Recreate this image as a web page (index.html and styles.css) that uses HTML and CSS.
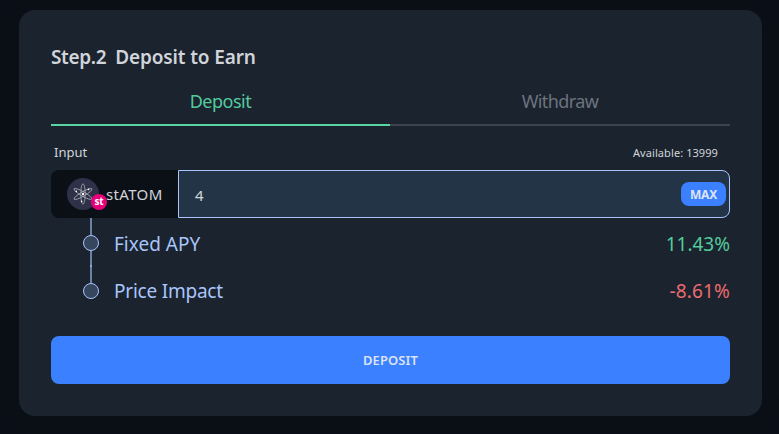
FILE: index.html
```html
<!DOCTYPE html>
<html lang="en">
<head>
<meta charset="utf-8">
<title>Deposit to Earn</title>
<link rel="stylesheet" href="styles.css">
</head>
<body>
<main class="card">
  <h1 class="title"><span class="step">Step.2</span><span>Deposit to Earn</span></h1>
  <nav class="tabs">
    <button class="tab tab-active">Deposit</button>
    <button class="tab">Withdraw</button>
  </nav>
  <div class="labels"><span class="label">Input</span><span class="available">Available: 13999</span></div>
  <div class="field">
    <div class="token">
      <span class="coin">
        <svg class="atom" viewBox="0 0 32 32" width="32" height="32">
          <circle cx="16" cy="16" r="16" fill="#2e3148"/>
          <g fill="none" stroke="#c3c5cf" stroke-width=".65">
            <ellipse cx="16" cy="16" rx="2.2" ry="10.3"/>
            <ellipse cx="16" cy="16" rx="2.2" ry="10.3" transform="rotate(60 16 16)"/>
            <ellipse cx="16" cy="16" rx="2.2" ry="10.3" transform="rotate(-60 16 16)"/>
          </g>
          <g fill="#fff"><circle cx="16" cy="16" r="1.2"/><circle cx="21.5" cy="11.3" r=".85"/><circle cx="9.3" cy="13.3" r=".85"/><circle cx="14.6" cy="23.3" r=".85"/></g>
        </svg>
        <span class="badge">st</span>
      </span>
      <span class="symbol">stATOM</span>
    </div>
    <div class="amount"><span class="value">4</span><button class="max">MAX</button></div>
  </div>
  <ul class="stats">
    <li class="stat"><span class="rail"><i class="line"></i><i class="dot"></i><i class="line line-after"></i><i class="joint"></i></span><span class="name fixed">Fixed APY</span><span class="up">11.43%</span></li>
    <li class="stat"><span class="rail"><i class="joint"></i><i class="line line-short"></i><i class="dot"></i></span><span class="name">Price Impact</span><span class="down">-8.61%</span></li>
  </ul>
  <button class="submit">DEPOSIT</button>
</main>
</body>
</html>
```
FILE: styles.css
```css
* { box-sizing: border-box; }
body {
  margin: 0;
  height: 434px;
  padding: 10px 17px 18px 19px;
  overflow: hidden;
  background: #0b1018;
  color: #d1d4d9;
  font-family: "Segoe UI", "Noto Sans", sans-serif;
}
button { border: 0; padding: 0; background: none; color: inherit; font: inherit; }
.card {
  height: 406px;
  padding: 32px;
  border-radius: 16px;
  background: #1a232e;
  box-shadow: 0 4px 24px rgba(10, 16, 20, .8);
}
.title {
  display: flex;
  gap: 9px;
  margin: 0;
  height: 30px;
  font-size: 19px;
  line-height: 30px;
  font-weight: 600;
  letter-spacing: -.13px;
  white-space: nowrap;
}
.step { letter-spacing: -.35px; }
.tabs { display: flex; height: 44px; margin-top: 10px; }
.tab {
  flex: 1;
  padding-bottom: 4px;
  border-bottom: 2px solid #3c444f;
  color: #6c737d;
  font-size: 18px;
  letter-spacing: -.5px;
}
.tab + .tab { letter-spacing: -.6px; }
.tab-active { flex: 0 0 339px; border-color: #58d5a2; color: #54cb9d; }
.labels {
  display: flex;
  justify-content: space-between;
  align-items: center;
  height: 44px;
  padding: 8px 12px 0 3px;
}
.label { font-size: 13px; }
.available { font-size: 11px; letter-spacing: .08px; }
.field { display: flex; height: 48px; }
.token {
  display: flex;
  align-items: center;
  width: 127px;
  padding-left: 16px;
  border-radius: 8px 0 0 8px;
  background: #0b1017;
}
.coin { position: relative; width: 39px; height: 32px; }
.atom { display: block; }
.badge {
  position: absolute;
  left: 24px;
  top: 16px;
  width: 16px;
  height: 16px;
  border-radius: 50%;
  background: #e6007a;
  color: #fff;
  font-size: 10px;
  font-weight: 700;
  line-height: 15px;
  letter-spacing: -.3px;
  text-align: center;
}
.symbol { font-size: 15px; letter-spacing: .35px; }
.amount {
  flex: 1;
  display: flex;
  align-items: center;
  justify-content: space-between;
  padding: 0 3px 0 16px;
  border: 1px solid #a9c5fb;
  border-radius: 0 8px 8px 0;
  background: #243447;
}
.value { font-size: 15px; padding-top: 2px; }
.max {
  width: 45px;
  height: 24px;
  border-radius: 8px;
  background: #3a80ff;
  color: #dbe3f4;
  font-size: 12px;
  font-weight: 700;
  letter-spacing: -.25px;
}
.stats { list-style: none; margin: 0; padding: 0; }
.stat { display: flex; height: 48px; font-size: 19px; line-height: 28px; color: #a9c5fb; }
.rail { display: flex; flex-direction: column; align-items: center; width: 80px; height: 48px; margin-right: -17px; }
.line { width: 2px; height: 17px; background: #6b81a5; }
.line-after { height: 14px; }
.line-short { height: 16px; }
.joint { width: 2px; height: 1px; background: #8ea8d4; }
.dot { width: 16px; height: 16px; border: 1px solid #a9c5fb; border-radius: 50%; background: #36465d; }
.name { flex: 1; padding-top: 11px; letter-spacing: -.22px; }
.fixed { padding-top: 12px; letter-spacing: 0; }
.up, .down { letter-spacing: 0; }
.up { padding-top: 12px; color: #54cb9d; }
.down { padding-top: 11px; letter-spacing: .15px; color: #ee6b70; }
.submit {
  display: block;
  width: 100%;
  height: 48px;
  margin-top: 22px;
  border-radius: 8px;
  background: #3a80ff;
  color: #dbe3f4;
  font-size: 13px;
  font-weight: 600;
  letter-spacing: .1px;
}
```
